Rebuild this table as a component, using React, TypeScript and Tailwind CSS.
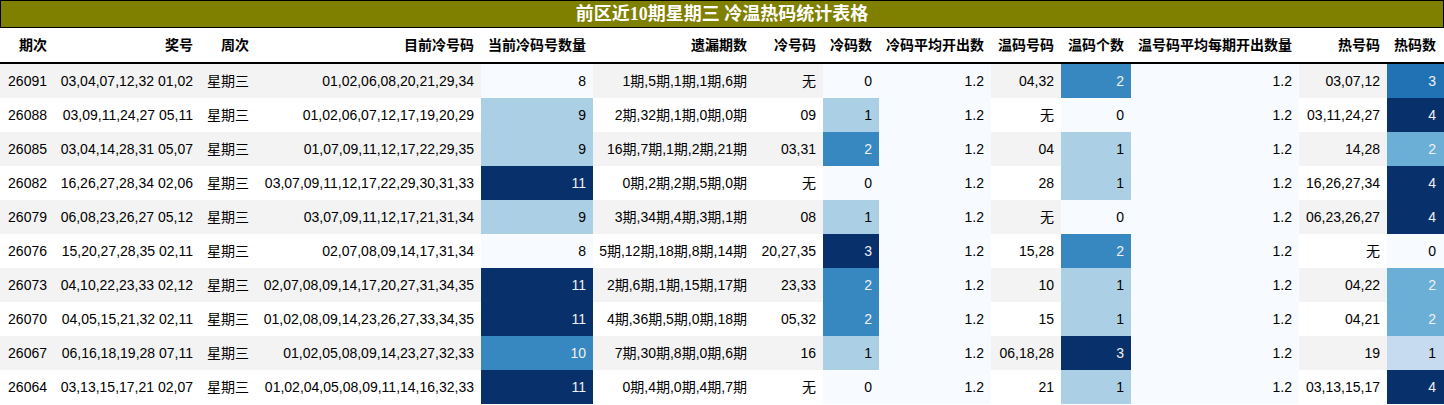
type Row = {
  period: string;
  draw: string;
  weekday: string;
  coldNow: string;
  coldNowCount: number;
  missing: string;
  cold: string;
  coldCount: number;
  coldAvg: number;
  warm: string;
  warmCount: number;
  warmAvg: number;
  hot: string;
  hotCount: number;
};

const rows: Row[] = [
  { period: "26091", draw: "03,04,07,12,32 01,02", weekday: "星期三", coldNow: "01,02,06,08,20,21,29,34", coldNowCount: 8, missing: "1期,5期,1期,1期,6期", cold: "无", coldCount: 0, coldAvg: 1.2, warm: "04,32", warmCount: 2, warmAvg: 1.2, hot: "03,07,12", hotCount: 3 },
  { period: "26088", draw: "03,09,11,24,27 05,11", weekday: "星期三", coldNow: "01,02,06,07,12,17,19,20,29", coldNowCount: 9, missing: "2期,32期,1期,0期,0期", cold: "09", coldCount: 1, coldAvg: 1.2, warm: "无", warmCount: 0, warmAvg: 1.2, hot: "03,11,24,27", hotCount: 4 },
  { period: "26085", draw: "03,04,14,28,31 05,07", weekday: "星期三", coldNow: "01,07,09,11,12,17,22,29,35", coldNowCount: 9, missing: "16期,7期,1期,2期,21期", cold: "03,31", coldCount: 2, coldAvg: 1.2, warm: "04", warmCount: 1, warmAvg: 1.2, hot: "14,28", hotCount: 2 },
  { period: "26082", draw: "16,26,27,28,34 02,06", weekday: "星期三", coldNow: "03,07,09,11,12,17,22,29,30,31,33", coldNowCount: 11, missing: "0期,2期,2期,5期,0期", cold: "无", coldCount: 0, coldAvg: 1.2, warm: "28", warmCount: 1, warmAvg: 1.2, hot: "16,26,27,34", hotCount: 4 },
  { period: "26079", draw: "06,08,23,26,27 05,12", weekday: "星期三", coldNow: "03,07,09,11,12,17,21,31,34", coldNowCount: 9, missing: "3期,34期,4期,3期,1期", cold: "08", coldCount: 1, coldAvg: 1.2, warm: "无", warmCount: 0, warmAvg: 1.2, hot: "06,23,26,27", hotCount: 4 },
  { period: "26076", draw: "15,20,27,28,35 02,11", weekday: "星期三", coldNow: "02,07,08,09,14,17,31,34", coldNowCount: 8, missing: "5期,12期,18期,8期,14期", cold: "20,27,35", coldCount: 3, coldAvg: 1.2, warm: "15,28", warmCount: 2, warmAvg: 1.2, hot: "无", hotCount: 0 },
  { period: "26073", draw: "04,10,22,23,33 02,12", weekday: "星期三", coldNow: "02,07,08,09,14,17,20,27,31,34,35", coldNowCount: 11, missing: "2期,6期,1期,15期,17期", cold: "23,33", coldCount: 2, coldAvg: 1.2, warm: "10", warmCount: 1, warmAvg: 1.2, hot: "04,22", hotCount: 2 },
  { period: "26070", draw: "04,05,15,21,32 02,11", weekday: "星期三", coldNow: "01,02,08,09,14,23,26,27,33,34,35", coldNowCount: 11, missing: "4期,36期,5期,0期,18期", cold: "05,32", coldCount: 2, coldAvg: 1.2, warm: "15", warmCount: 1, warmAvg: 1.2, hot: "04,21", hotCount: 2 },
  { period: "26067", draw: "06,16,18,19,28 07,11", weekday: "星期三", coldNow: "01,02,05,08,09,14,23,27,32,33", coldNowCount: 10, missing: "7期,30期,8期,0期,6期", cold: "16", coldCount: 1, coldAvg: 1.2, warm: "06,18,28", warmCount: 3, warmAvg: 1.2, hot: "19", hotCount: 1 },
  { period: "26064", draw: "03,13,15,17,21 02,07", weekday: "星期三", coldNow: "01,02,04,05,08,09,11,14,16,32,33", coldNowCount: 11, missing: "0期,4期,0期,4期,7期", cold: "无", coldCount: 0, coldAvg: 1.2, warm: "21", warmCount: 1, warmAvg: 1.2, hot: "03,13,15,17", hotCount: 4 },
];

// matplotlib "Blues"
const blues = ["#f7fbff", "#deebf7", "#c6dbef", "#9ecae1", "#6baed6", "#4292c6", "#2171b5", "#08519c", "#08306b"];

function hex(c: string) {
  return [1, 3, 5].map((i) => parseInt(c.slice(i, i + 2), 16));
}

function shade(v: number, min: number, max: number) {
  const t = max === min ? 0 : (v - min) / (max - min);
  const pos = t * (blues.length - 1);
  const i = Math.min(Math.floor(pos), blues.length - 2);
  const f = pos - i;
  const a = hex(blues[i]);
  const b = hex(blues[i + 1]);
  const rgb = a.map((x, k) => Math.round(x + (b[k] - x) * f));
  const lum = rgb
    .map((x) => {
      const s = x / 255;
      return s <= 0.03928 ? s / 12.92 : Math.pow((s + 0.055) / 1.055, 2.4);
    })
    .reduce((acc, s, k) => acc + s * [0.2126, 0.7152, 0.0722][k], 0);
  return {
    backgroundColor: `rgb(${rgb.join(",")})`,
    color: lum < 0.408 ? "#f1f1f1" : "#000000",
  };
}

function range(key: keyof Row) {
  const vals = rows.map((r) => r[key] as number);
  return [Math.min(...vals), Math.max(...vals)];
}

const gradientCols: (keyof Row)[] = ["coldNowCount", "coldCount", "coldAvg", "warmCount", "warmAvg", "hotCount"];
const ranges = Object.fromEntries(gradientCols.map((k) => [k, range(k)]));

const columns: { key: keyof Row; title: string; width: string; pad: string }[] = [
  { key: "period", title: "期次", width: "w-[54px]", pad: "pr-[7px]" },
  { key: "draw", title: "奖号", width: "w-[146px]", pad: "pr-[7px]" },
  { key: "weekday", title: "周次", width: "w-[56px]", pad: "pr-[7px]" },
  { key: "coldNow", title: "目前冷号码", width: "w-[225px]", pad: "pr-[7px]" },
  { key: "coldNowCount", title: "当前冷码号数量", width: "w-[112px]", pad: "pr-[7px]" },
  { key: "missing", title: "遗漏期数", width: "w-[161px]", pad: "pr-[7px]" },
  { key: "cold", title: "冷号码", width: "w-[69px]", pad: "pr-[7px]" },
  { key: "coldCount", title: "冷码数", width: "w-[56px]", pad: "pr-[7px]" },
  { key: "coldAvg", title: "冷码平均开出数", width: "w-[112px]", pad: "pr-[7px]" },
  { key: "warm", title: "温码号码", width: "w-[70px]", pad: "pr-[7px]" },
  { key: "warmCount", title: "温码个数", width: "w-[70px]", pad: "pr-[7px]" },
  { key: "warmAvg", title: "温号码平均每期开出数量", width: "w-[168px]", pad: "pr-[7px]" },
  { key: "hot", title: "热号码", width: "w-[88px]", pad: "pr-[7px]" },
  { key: "hotCount", title: "热码数", width: "w-[57px]", pad: "pr-[8px]" },
];

export default function App() {
  return (
    <div className="w-[1444px] bg-white font-['Liberation_Sans','Noto_Sans_CJK_SC',sans-serif] text-[14px] text-black">
      {/* Caption */}
      <div className="h-[28px] border border-black bg-[#808000] flex items-center justify-center">
        <span className="text-white font-bold text-[18px] leading-none font-['Liberation_Serif','Noto_Sans_CJK_SC',serif]">
          前区近10期星期三 冷温热码统计表格
        </span>
      </div>

      <table className="w-[1444px] table-fixed border-separate border-spacing-0">
        <colgroup>
          {columns.map((c) => (
            <col key={c.key} className={c.width} />
          ))}
        </colgroup>
        <thead>
          <tr>
            {columns.map((c) => (
              <th
                key={c.key}
                className={`h-[36px] p-0 ${c.pad} text-right font-bold whitespace-nowrap border-b-2 border-black`}
              >
                {c.title}
              </th>
            ))}
          </tr>
        </thead>
        <tbody>
          {rows.map((r, i) => (
            <tr key={r.period} className={i % 2 === 0 ? "bg-[#f3f3f3]" : "bg-white"}>
              {columns.map((c) => {
                const grad = gradientCols.includes(c.key);
                const style = grad ? shade(r[c.key] as number, ranges[c.key][0], ranges[c.key][1]) : undefined;
                return (
                  <td key={c.key} style={style} className={`h-[34px] p-0 ${c.pad} text-right whitespace-nowrap`}>
                    {r[c.key]}
                  </td>
                );
              })}
            </tr>
          ))}
        </tbody>
      </table>
    </div>
  );
}
